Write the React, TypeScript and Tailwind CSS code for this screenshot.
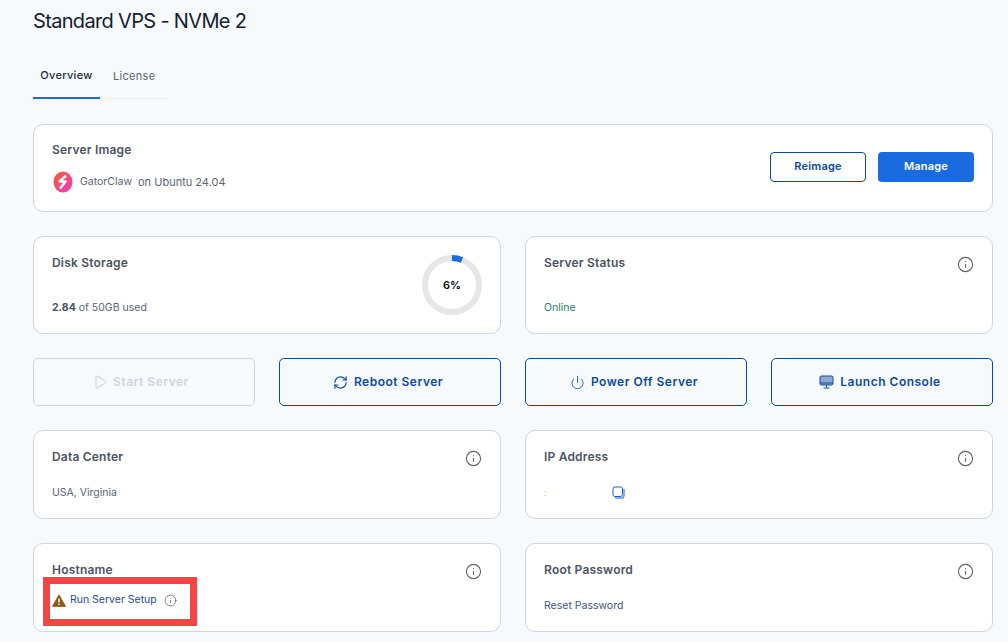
import { Info, RefreshCw, Power } from "lucide-react";

function InfoIcon({ className = "" }: { className?: string }) {
  return <Info className={"w-[17px] h-[17px] text-[#5f6368] " + className} strokeWidth={1.6} />;
}

function PlayOutline() {
  return (
    <svg width="12" height="14" viewBox="0 0 12 14" fill="none">
      <path d="M1 2.2c0-.9 1-1.5 1.8-1l7.6 4.6c.8.5.8 1.6 0 2.1L2.8 12.8c-.8.5-1.8-.1-1.8-1Z" stroke="currentColor" strokeWidth="1.1" strokeLinejoin="round" />
    </svg>
  );
}

function Monitor() {
  return (
    <svg width="15" height="14" viewBox="0 0 15 14" fill="none">
      <rect x="1" y="1" width="13" height="9" rx="1.4" fill="#8fa9d3" stroke="#0b4a99" strokeWidth="1" />
      <path d="M1 8h13" stroke="#0b4a99" strokeWidth="1" />
      <path d="M7.5 10v2.6M4.5 13h6" stroke="#0b4a99" strokeWidth="1" />
    </svg>
  );
}

function Warning() {
  return (
    <svg width="14" height="13" viewBox="0 0 14 13">
      <path d="M7 .8 13.6 12.4H.4Z" fill="#8a5a14" stroke="#8a5a14" strokeWidth="0.8" strokeLinejoin="round" />
      <path d="M7 4.4v4" stroke="#fff" strokeWidth="1.4" />
      <path d="M7 9.4v1.5" stroke="#fff" strokeWidth="1.4" />
    </svg>
  );
}

function Logo() {
  return (
    <svg width="20" height="22" viewBox="0 0 20 22">
      <defs>
        <linearGradient id="lg" x1="0" y1="0" x2="1" y2="1">
          <stop offset="0" stopColor="#f4602c" />
          <stop offset="1" stopColor="#f536c8" />
        </linearGradient>
      </defs>
      <ellipse cx="10" cy="11" rx="9.5" ry="10.5" fill="url(#lg)" />
      <path d="M13 4.5 6.5 10.5h6L7 17.5" fill="none" stroke="#fff" strokeWidth="2.4" strokeLinejoin="round" />
    </svg>
  );
}

function Donut() {
  const r = 27;
  const c = 2 * Math.PI * r;
  return (
    <div className="relative w-[62px] h-[62px]">
      <svg width="62" height="62" viewBox="0 0 62 62" className="-rotate-90">
        <circle cx="31" cy="31" r={r} fill="none" stroke="#e6e6e6" strokeWidth="6" />
        <circle cx="31" cy="31" r={r} fill="none" stroke="#1a6ae0" strokeWidth="6" strokeDasharray={`${c * 0.06} ${c}`} />
      </svg>
      <div className="absolute inset-0 flex items-center justify-center text-[11px] font-semibold text-black">6%</div>
    </div>
  );
}

function Title({ children }: { children: React.ReactNode }) {
  return <div className="text-[12px] leading-[16px] font-semibold tracking-[0.2px] text-[#4a5362]">{children}</div>;
}

function Card({ children, className = "" }: { children: React.ReactNode; className?: string }) {
  return <div className={"bg-white border border-[#cfd5de] rounded-[10px] " + className}>{children}</div>;
}

function ActionButton({ icon, label, disabled }: { icon: React.ReactNode; label: string; disabled?: boolean }) {
  return (
    <button
      className={
        "h-[48px] pr-[4px] rounded-[5px] border flex items-center justify-center gap-[6px] text-[12px] font-semibold tracking-[0.5px] " +
        (disabled ? "border-[#cfd5de] text-[#cfd5de]" : "border-[#0b4a99] text-[#0b4a99]")
      }
    >
      {icon}
      {label}
    </button>
  );
}

export default function App() {
  return (
    <div
      className="relative w-[1008px] h-[642px] overflow-hidden bg-[#f7fafd] pl-[33px] pr-[15px] pt-[9px]"
      style={{ fontFamily: "Inter, 'Liberation Sans', sans-serif" }}
    >
      <h1 className="text-[20px] leading-[24px] tracking-[-0.67px] text-[#14202e] font-normal">Standard VPS - NVMe 2</h1>

      <div className="mt-[21px] flex w-[135px] h-[45px] border-b border-[#e9edf2] text-[11px] tracking-[0.3px]">
        <div className="w-[67px] h-[45px] border-b-2 border-[#1a6ae0] flex items-center justify-center font-medium text-[#1c2a3a]">Overview</div>
        <div className="ml-[13px] h-[44px] flex items-center text-[#5c6470]">License</div>
      </div>

      <Card className="mt-[25px] h-[88px] pl-[18px] pr-[18px] flex items-center justify-between">
        <div>
          <Title>Server Image</Title>
          <div className="mt-[13px] mb-[1px] ml-[1px] flex items-center text-[10.5px] text-[#5c6470]">
            <Logo />
            <span className="ml-[7px]">GatorClaw</span>
            <span className="ml-[6px] text-[11px]">on Ubuntu 24.04</span>
          </div>
        </div>
        <div className="flex gap-[12px] mb-[2px]">
          <button className="w-[96px] h-[30px] pb-[1px] rounded-[4px] border border-[#0b4a99] text-[#0b4a99] text-[11px] font-semibold tracking-[0.2px]">Reimage</button>
          <button className="w-[96px] h-[30px] pb-[1px] rounded-[4px] bg-[#1a6ae0] text-white text-[11px] font-semibold tracking-[0.2px]">Manage</button>
        </div>
      </Card>

      <div className="mt-[24px] grid grid-cols-2 gap-x-[24px]">
        <Card className="h-[98px] pl-[18px] pr-[17px] pt-[17px] flex items-start justify-between">
          <div className="pt-[1px]">
            <Title>Disk Storage</Title>
            <div className="mt-[30px] text-[10.5px] leading-[14px] text-[#5c6470]"><b className="font-bold text-[#4a5362]">2.84</b> of 50GB used</div>
          </div>
          <Donut />
        </Card>
        <Card className="h-[98px] pl-[18px] pr-[18px] pt-[18px]">
          <div className="flex justify-between items-start h-[17px]">
            <Title>Server Status</Title>
            <InfoIcon className="mt-[1px]" />
          </div>
          <div className="mt-[29px] text-[10.5px] leading-[14px] text-[#1f7f68]">Online</div>
        </Card>
      </div>

      <div className="mt-[24px] grid grid-cols-4 gap-x-[24px]">
        <ActionButton disabled icon={<PlayOutline />} label="Start Server" />
        <ActionButton icon={<RefreshCw className="w-[15px] h-[15px]" strokeWidth={1.8} />} label="Reboot Server" />
        <ActionButton icon={<Power className="w-[15px] h-[15px]" strokeWidth={1.3} />} label="Power Off Server" />
        <ActionButton icon={<Monitor />} label="Launch Console" />
      </div>

      <div className="mt-[24px] grid grid-cols-2 gap-x-[24px] gap-y-[24px]">
        <Card className="h-[89px] pl-[18px] pr-[18px] pt-[18px]">
          <div className="flex justify-between items-start h-[17px]">
            <Title>Data Center</Title>
            <InfoIcon className="mt-[1px]" />
          </div>
          <div className="mt-[20px] text-[10.5px] leading-[14px] text-[#5c6470]">USA, Virginia</div>
        </Card>
        <Card className="h-[89px] pl-[18px] pr-[18px] pt-[18px]">
          <div className="flex justify-between items-start h-[17px]">
            <Title>IP Address</Title>
            <InfoIcon className="mt-[1px]" />
          </div>
          <div className="mt-[19px] flex items-center h-[14px]">
            <span className="text-[9px] text-[#f2b66b] leading-none">:</span>
            <svg className="ml-[65px]" width="13" height="13" viewBox="0 0 13 13" fill="none">
              <rect x="1" y="1" width="9.5" height="9.5" rx="2" stroke="#1a5fc8" strokeWidth="1" />
              <path d="M12 3v7a2 2 0 0 1-2 2H3" stroke="#1a5fc8" strokeWidth="1" />
            </svg>
          </div>
        </Card>
        <Card className="h-[89px] pl-[18px] pr-[18px] pt-[18px]">
          <div className="flex justify-between items-start h-[17px]">
            <Title>Hostname</Title>
            <InfoIcon className="mt-[1px]" />
          </div>
          <div className="mt-[14px] flex items-center text-[10.5px] leading-[14px] text-[#24508f]">
            <Warning />
            <span className="ml-[4px]">Run Server Setup</span>
            <Info className="ml-[7px] w-[13px] h-[13px] text-[#5f6368]" strokeWidth={1.5} />
          </div>
        </Card>
        <Card className="h-[89px] pl-[18px] pr-[18px] pt-[18px]">
          <div className="flex justify-between items-start h-[17px]">
            <Title>Root Password</Title>
            <InfoIcon className="mt-[1px]" />
          </div>
          <div className="mt-[20px] text-[10.5px] leading-[14px] text-[#3d5674]">Reset Password</div>
        </Card>
      </div>

      <div className="absolute left-[43px] top-[577px] w-[154px] h-[49px] border-[7px] border-[#f44444]" />
    </div>
  );
}
